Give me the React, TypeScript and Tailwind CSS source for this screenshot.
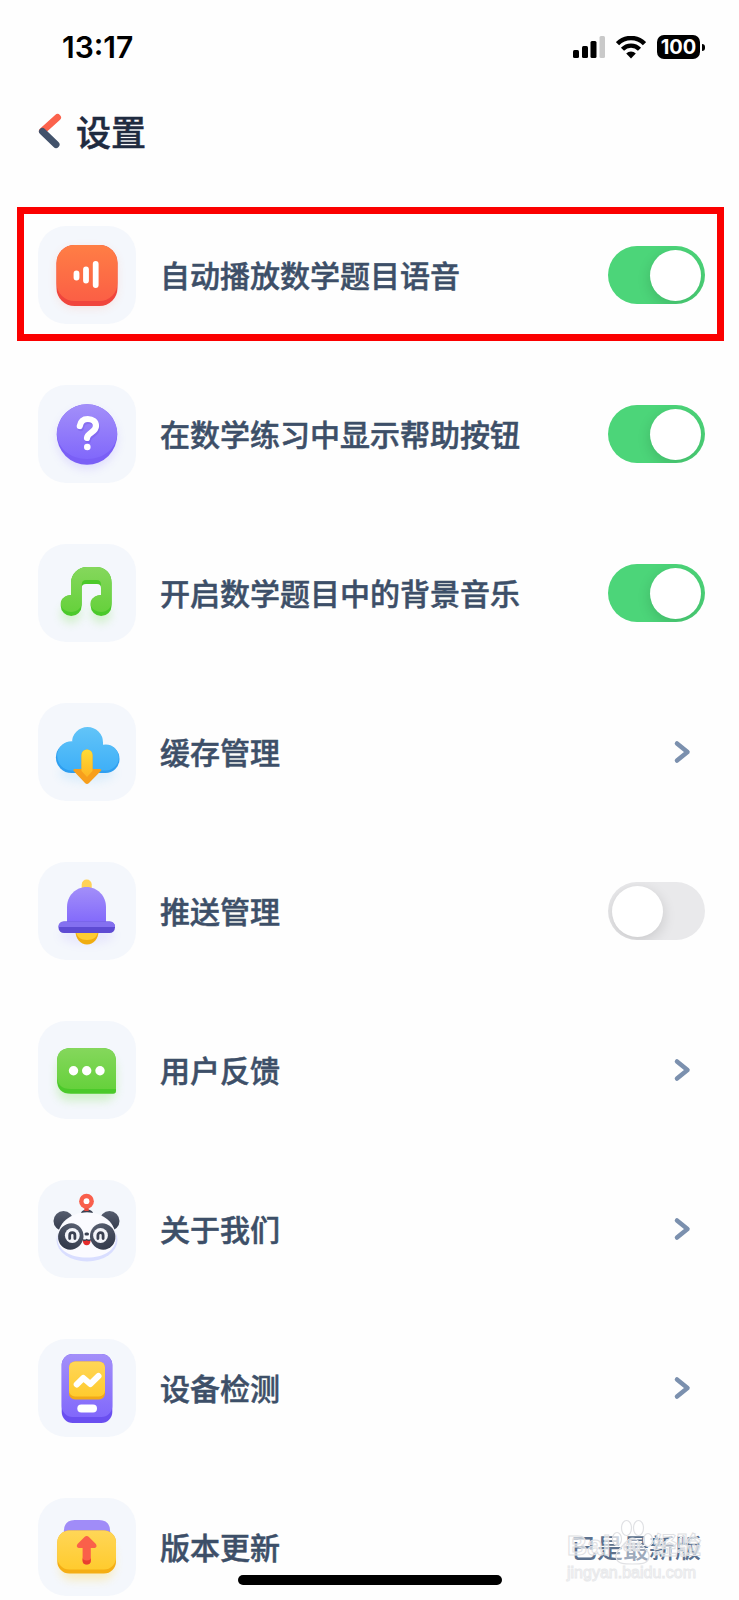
/**
 * Frontend Component: SettingsPage
 * Description: 设置页面 (移动端)
 */
import React, { useState } from "react";

type ToggleKey = "voice" | "help" | "music" | "push";

interface SettingItem {
    id: string;
    label: string;
    icon: React.ReactNode;
    toggle?: ToggleKey;
    note?: string;
    highlighted?: boolean;
}

const VoiceIcon = () => (
    <>
        <rect x="19" y="22" width="60" height="60" rx="18" fill="#ff6a3d" opacity="0.14" filter="url(#soft)" />
        <rect x="18.500" y="19" width="61" height="61" rx="18" fill="#f0453c" />
        <rect x="18.500" y="19" width="61" height="56" rx="18" fill="url(#orange)" />
        <path d="M38.500 47.500v4M48 43.500v11M57.700 38v21" stroke="#fff" strokeWidth="5.800" strokeLinecap="round" />
    </>
);

const HelpIcon = () => (
    <>
        <circle cx="49" cy="54" r="30" fill="#8b74ff" opacity="0.2" filter="url(#soft)" />
        <circle cx="49" cy="49.5" r="30.3" fill="#7a5ff6" />
        <path d="M18.9 46a30.3 30.3 0 0 1 60.2 0c1 17-13 28-30 28s-31-11-30.2-28Z" fill="url(#purple)" />
        <path
            d="M41.800 41c.8-4.800 3.800-7 8-7 4.800 0 8.200 2.700 8.200 7 0 6.200-8.600 6.500-9 12"
            fill="none"
            stroke="#6c51e0"
            strokeWidth="6.200"
            strokeLinecap="round"
            opacity="0.35"
            transform="translate(1 2)"
        />
        <path
            d="M41.800 41c.8-4.800 3.800-7 8-7 4.800 0 8.200 2.700 8.200 7 0 6.200-8.600 6.500-9 12"
            fill="none"
            stroke="#fff"
            strokeWidth="6.200"
            strokeLinecap="round"
        />
        <circle cx="49.300" cy="62" r="3.300" fill="#fff" />
    </>
);

const MusicIcon = () => (
    <>
        <ellipse cx="33" cy="70" rx="10" ry="9" fill="#6edb3d" opacity="0.25" filter="url(#soft)" />
        <ellipse cx="63" cy="70" rx="10" ry="9" fill="#6edb3d" opacity="0.25" filter="url(#soft)" />
        <path
            d="M33 39c0-9 7-16 16-16h9c9 0 15.600 6 15.600 16v22.500a10.500 10.500 0 1 1-10.600-10.500V44q0-4-4-4H48q-4.300 0-4.300 4v17.500A10.500 10.500 0 1 1 33 51Z"
            fill="#4bc92a"
        />
        <path
            d="M33 39c0-9 7-16 16-16h9c9 0 15.600 6 15.600 16v19.500c0 5-4.800 9.500-10.300 9.500s-10.800-4-10.800-8.500c0-5 5-8.500 10.500-8.500V41q0-5-4-5H48q-4.300 0-4.300 5v18c0 5-5 9-10.500 9s-10.500-4-10.500-8.500c0-5 5-8.500 10.300-8.500Z"
            fill="url(#green)"
        />
    </>
);

const CloudIcon = () => (
    <>
        <ellipse cx="49" cy="70" rx="28" ry="9" fill="#45b0f5" opacity="0.14" filter="url(#soft)" />
        <g fill="#2f9ff0">
            <circle cx="33.500" cy="54.500" r="15.600" />
            <circle cx="67.500" cy="56" r="14" />
            <rect x="33" y="50" width="35" height="20" />
        </g>
        <path
            d="M34 39.500a15.500 15.500 0 0 1 31 0v2.300a13 13 0 1 1 2.500 25.700H33.500a14.600 14.600 0 1 1 .5-29.200Z"
            fill="url(#blue)"
        />
        <path
            d="M36.500 66h7V52a5.500 5.500 0 0 1 11 0v14h7.500q2 .5.8 2L51 80q-2 2-4 0L35.700 68q-1-1.500.8-2Z"
            fill="#f79f1c"
        />
        <path d="M43.500 68V52a5.500 5.500 0 0 1 11 0v16L49 74Z" fill="url(#arrow)" />
    </>
);

const BellIcon = () => (
    <>
        <ellipse cx="49" cy="73" rx="27" ry="9" fill="#8b74ff" opacity="0.12" filter="url(#soft)" />
        <rect x="43.700" y="17.500" width="10" height="14" rx="5" fill="#ffd257" />
        <path d="M37.500 69h23c0 8-5 13.500-11.500 13.500S37.500 77 37.500 69Z" fill="#f0ad10" />
        <path d="M38 68h22c0 7-5 10-11 10s-11-3-11-10Z" fill="#ffcc33" />
        <path d="M29 62V45c0-11 8.500-20 19.500-20S68 34 68 45v17Z" fill="url(#purple)" />
        <rect x="20.500" y="59.500" width="56.500" height="11.500" rx="5.500" fill="#5e4bd3" />
        <path d="M26 59.500h45.500q5.500 0 5.500 5.500H20.500q0-5.500 5.500-5.500Z" fill="#8470f0" />
    </>
);

const FeedbackIcon = () => (
    <>
        <rect x="19" y="36" width="59" height="44" rx="12" fill="#6edb3d" opacity="0.25" filter="url(#soft)" />
        <path d="M33 27h31q14 0 14 14v29q0 2.800-2.800 2.800H33q-14 0-14-14V41q0-14 14-14Z" fill="#4bc92a" />
        <path d="M33 27h31q14 0 14 14v27H33q-14 0-14-13V41q0-14 14-14Z" fill="url(#green)" />
        <g fill="#fff">
            <circle cx="35.500" cy="49.700" r="4.700" />
            <circle cx="48.700" cy="49.700" r="4.700" />
            <circle cx="62" cy="49.700" r="4.700" />
        </g>
    </>
);

const PandaIcon = () => (
    <>
        <ellipse cx="49" cy="60" rx="30.500" ry="21.500" fill="#d9deff" />
        <circle cx="25.500" cy="41" r="10" fill="url(#dark)" />
        <circle cx="71.500" cy="41" r="10" fill="url(#dark)" />
        <path d="M49 32.500c17 0 29 11 29 25.500 0 12-12 19.500-29 19.500S19.500 70 19.500 58c0-14.500 12.500-25.500 29.500-25.500Z" fill="#fbfbff" />
        <path d="M43 33q1-3.500 6-3.500t6 3.500q-6-1.500-12 0Z" fill="#3b4152" />
        <path d="M46.300 25h4.400v6h-4.400Z" fill="#e8483c" />
        <circle cx="48.500" cy="21.200" r="7.400" fill="#f95f4c" />
        <circle cx="48.500" cy="21.200" r="2.900" fill="#fff" />
        <ellipse cx="32.800" cy="56.500" rx="12.600" ry="13.200" transform="rotate(25 32.800 56.500)" fill="url(#dark)" />
        <ellipse cx="64.700" cy="56.500" rx="12.600" ry="13.200" transform="rotate(-25 64.700 56.500)" fill="url(#dark)" />
        <circle cx="34.300" cy="55.500" r="7.400" fill="#f4f5fa" />
        <circle cx="62.500" cy="55.500" r="7.400" fill="#f4f5fa" />
        <path
            d="M31.700 58.500v-3.200a2.600 2.600 0 0 1 5.200 0v3.200M59.900 58.500v-3.200a2.600 2.600 0 0 1 5.200 0v3.200"
            fill="none"
            stroke="#3b4152"
            strokeWidth="2.800"
            strokeLinecap="round"
        />
        <rect x="46.500" y="52.500" width="4.500" height="3" rx="1.500" fill="#3b4152" />
        <path d="M44.800 60h7.800c0 3.500-1.500 5.300-3.900 5.300s-3.900-1.800-3.900-5.300Z" fill="#e52c2c" />
        <path d="M44.500 59.500q2 1.500 4.200 0 2.200 1.500 4.200 0" fill="none" stroke="#3b4152" strokeWidth="1.300" />
    </>
);

const DeviceIcon = () => (
    <>
        <rect x="23.700" y="15" width="50.600" height="69" rx="11" fill="#6a4ff0" />
        <rect x="23.700" y="15" width="50.600" height="63" rx="11" fill="url(#purple)" />
        <rect x="31" y="22.500" width="36" height="38" rx="6" fill="#f2a918" />
        <rect x="31" y="22.500" width="36" height="35" rx="6" fill="url(#yellow)" />
        <path
            d="m38.700 45.500 6.600-6.500 7 6 8.200-8"
            fill="none"
            stroke="#fff"
            strokeWidth="6"
            strokeLinecap="round"
            strokeLinejoin="round"
        />
        <rect x="39.300" y="65.500" width="19.700" height="8" rx="4" fill="#fff" />
    </>
);

const UpdateIcon = () => (
    <>
        <rect x="22" y="44" width="54" height="38" rx="12" fill="#ffd23d" opacity="0.3" filter="url(#soft)" />
        <path d="M25.700 34q0-12 11-12H61q11.300 0 11.300 12v4H25.700Z" fill="#a08cf8" />
        <rect x="19.300" y="32.500" width="58.700" height="43" rx="12" fill="#f5ae14" />
        <rect x="19.300" y="32.500" width="58.700" height="39" rx="12" fill="url(#yellow)" />
        <path
            d="M46.500 39q2.200-1.800 4.400 0l7 7q1.800 3-1.300 4h-3.800v12.500a4.100 4.100 0 0 1-8.200 0V50h-3.800q-3.200-1-1.300-4Z"
            fill="#fa604a"
        />
        <path d="M44.600 59.500a4.100 3 0 0 0 8.200 0v3a4.100 4.100 0 0 1-8.200 0Z" fill="#e8402f" />
    </>
);

const ITEMS: SettingItem[] = [
    { id: "voice", label: "自动播放数学题目语音", icon: <VoiceIcon />, toggle: "voice", highlighted: true },
    { id: "help", label: "在数学练习中显示帮助按钮", icon: <HelpIcon />, toggle: "help" },
    { id: "music", label: "开启数学题目中的背景音乐", icon: <MusicIcon />, toggle: "music" },
    { id: "cache", label: "缓存管理", icon: <CloudIcon /> },
    { id: "push", label: "推送管理", icon: <BellIcon />, toggle: "push" },
    { id: "feedback", label: "用户反馈", icon: <FeedbackIcon /> },
    { id: "about", label: "关于我们", icon: <PandaIcon /> },
    { id: "device", label: "设备检测", icon: <DeviceIcon /> },
    { id: "update", label: "版本更新", icon: <UpdateIcon />, note: "已是最新版" },
];

const GRADIENTS = [
    { id: "orange", from: "#ff7e45", to: "#fb5f45" },
    { id: "purple", from: "#a38ff9", to: "#8168fb" },
    { id: "green", from: "#85d75c", to: "#66d13c" },
    { id: "blue", from: "#62c4f8", to: "#3fb0f8" },
    { id: "yellow", from: "#ffd657", to: "#ffcb2e" },
    { id: "arrow", from: "#ffdc35", to: "#fdb524" },
    { id: "dark", from: "#565d6e", to: "#333a4b" },
];

// 所有图标共用的渐变与阴影
function IconDefs() {
    return (
        <svg className="absolute size-0" aria-hidden="true">
            <defs>
                {GRADIENTS.map((g) => (
                    <linearGradient key={g.id} id={g.id} x1="0" y1="0" x2="0" y2="1">
                        <stop offset="0" stopColor={g.from} />
                        <stop offset="1" stopColor={g.to} />
                    </linearGradient>
                ))}
                <filter id="soft" x="-50%" y="-50%" width="200%" height="200%">
                    <feGaussianBlur stdDeviation="5" />
                </filter>
            </defs>
        </svg>
    );
}

function StatusBar() {
    return (
        <div className="flex h-[94px] items-center justify-between pr-[34px] pl-[62px] text-black">
            <span className="font-['Inter'] text-[30px] font-semibold">13:17</span>
            <div className="flex items-center gap-[11px]">
                <svg width="32" height="22" viewBox="0 0 32 22" aria-hidden="true">
                    <rect x="0" y="14" width="6" height="8" rx="1.500" />
                    <rect x="9" y="10" width="6" height="12" rx="1.500" />
                    <rect x="17.500" y="5" width="6" height="17" rx="1.500" />
                    <rect x="26.500" y="0" width="5.500" height="22" rx="1.500" fill="#c9c9c9" />
                </svg>
                <svg width="30" height="23" viewBox="0 0 30 23" aria-hidden="true">
                    <path d="M1.500 7.700a19 19 0 0 1 27 0" fill="none" stroke="#000" strokeWidth="4.600" />
                    <path d="M6.500 13.200a11.700 11.700 0 0 1 17 0" fill="none" stroke="#000" strokeWidth="4.300" />
                    <path d="m15 22.500-4.800-4.900a6.500 6.500 0 0 1 9.600 0Z" />
                </svg>
                <div className="flex items-center gap-0.5">
                    <span className="flex h-6 w-[43px] items-center justify-center rounded-[7px] bg-black font-['Inter'] text-[20px] font-bold text-white">
                        100
                    </span>
                    <span className="h-[7px] w-[3px] rounded-r-full bg-black" />
                </div>
            </div>
        </div>
    );
}

function Watermark() {
    return (
        <div
            className="pointer-events-none absolute -top-1 right-1 w-[134px] font-['Liberation_Sans','Noto_Sans_CJK_SC',sans-serif]"
            aria-hidden="true"
        >
            <svg className="absolute -top-1 left-[44px]" width="44" height="46" viewBox="0 0 44 46">
                <g fill="#fff" fillOpacity="0.7" stroke="#e0e1e4" strokeWidth="1.200">
                    <ellipse cx="15.500" cy="9" rx="5" ry="7.500" />
                    <ellipse cx="27.500" cy="9" rx="5" ry="7.500" />
                    <ellipse cx="6" cy="20" rx="4.500" ry="6.500" />
                    <ellipse cx="37" cy="21" rx="4.500" ry="6.500" />
                    <path d="M21.500 19c5 0 7 5 11 9s7 7 5 12-8 5-16 5-14 0-16-5 1-8 5-12 6-9 11-9Z" fillOpacity="0.4" />
                </g>
            </svg>
            <div className="relative flex items-center justify-between pt-1.5 text-[28px] leading-[34px] font-bold text-white/60 [-webkit-text-stroke:1px_#dfe0e3]">
                <span>Bai</span>
                <span className="text-[14px]">du</span>
                <span className="text-[24px]">经验</span>
            </div>
            <p className="relative text-[16px] leading-5 text-white [-webkit-text-stroke:1px_#e8e9eb]">jingyan.baidu.com</p>
        </div>
    );
}

interface RowProps {
    item: SettingItem;
    checked: boolean;
    onToggle: (key: ToggleKey) => void;
}

function SettingRow({ item, checked, onToggle }: RowProps) {
    const content = (
        <>
            <span className="flex size-[98px] shrink-0 rounded-[28px] bg-[#f4f7fc]">
                <svg className="size-full" viewBox="0 0 98 98" aria-hidden="true">
                    {item.icon}
                </svg>
            </span>
            <span className="flex-1 pb-0.5 [-webkit-text-stroke:0.5px_currentColor]">{item.label}</span>
        </>
    );

    return (
        <li className="relative">
            {item.toggle ? (
                <label className="flex items-center gap-6">
                    {content}
                    <input
                        type="checkbox"
                        role="switch"
                        checked={checked}
                        onChange={() => onToggle(item.toggle!)}
                        className="flex h-[58px] w-[97px] shrink-0 appearance-none items-center overflow-hidden rounded-full bg-[#e9e9eb] px-1 before:size-[51px] before:rounded-full before:bg-white before:shadow-[0_4px_14px_rgba(0,0,0,0.14)] checked:justify-end checked:bg-[#4cd579]"
                    />
                </label>
            ) : (
                <button type="button" className="flex w-full items-center gap-6 text-left">
                    {content}
                    {item.note ? (
                        <span className="relative pr-1 text-[26px] text-[#5c718e]">
                            {item.note}
                            <Watermark />
                        </span>
                    ) : (
                        <svg className="mr-[13px]" width="20" height="24" viewBox="0 0 20 24" fill="none" aria-hidden="true">
                            <path d="m5 3.500 10.500 8.500L5 20.500" stroke="#7b90ae" strokeWidth="4.500" strokeLinecap="round" strokeLinejoin="round" />
                        </svg>
                    )}
                </button>
            )}
            {item.highlighted && (
                <div className="pointer-events-none absolute -top-[19px] -right-[19px] -bottom-[17px] -left-[21px] border-[7px] border-[#fb0000]" />
            )}
        </li>
    );
}

export default function App() {
    const [toggles, setToggles] = useState<Record<ToggleKey, boolean>>({
        voice: true,
        help: true,
        music: true,
        push: false,
    });

    const handleToggle = (key: ToggleKey) => {
        setToggles((prev) => ({ ...prev, [key]: !prev[key] }));
    };

    return (
        <div className="relative min-h-screen overflow-hidden bg-[#fefefe] font-['Noto_Sans_CJK_SC',sans-serif]">
            <IconDefs />
            <StatusBar />

            <header className="flex h-[74px] items-center gap-3.5 pl-[38px]">
                <button type="button" aria-label="返回">
                    <svg width="24" height="36" viewBox="0 0 24 36" fill="none" strokeWidth="7" strokeLinecap="round">
                        <path d="M4.500 18 19.500 4.500" stroke="#fb624c" />
                        <path d="M4.500 18.500 18 31.500" stroke="#42526b" />
                    </svg>
                </button>
                <h1 className="text-[35px] leading-10 font-medium text-[#1f2b40] [-webkit-text-stroke:0.5px_currentColor]">设置</h1>
            </header>

            <main className="pt-[58px] pr-[34px] pl-[38px]">
                <ul className="flex flex-col gap-[61px] text-[30px] leading-10 font-medium text-[#3d4f68]">
                    {ITEMS.map((item) => (
                        <SettingRow
                            key={item.id}
                            item={item}
                            checked={item.toggle ? toggles[item.toggle] : false}
                            onToggle={handleToggle}
                        />
                    ))}
                </ul>
            </main>

            <div className="absolute inset-x-0 bottom-[15px] flex justify-center">
                <div className="h-[10px] w-[264px] rounded-full bg-black" />
            </div>
        </div>
    );
}
